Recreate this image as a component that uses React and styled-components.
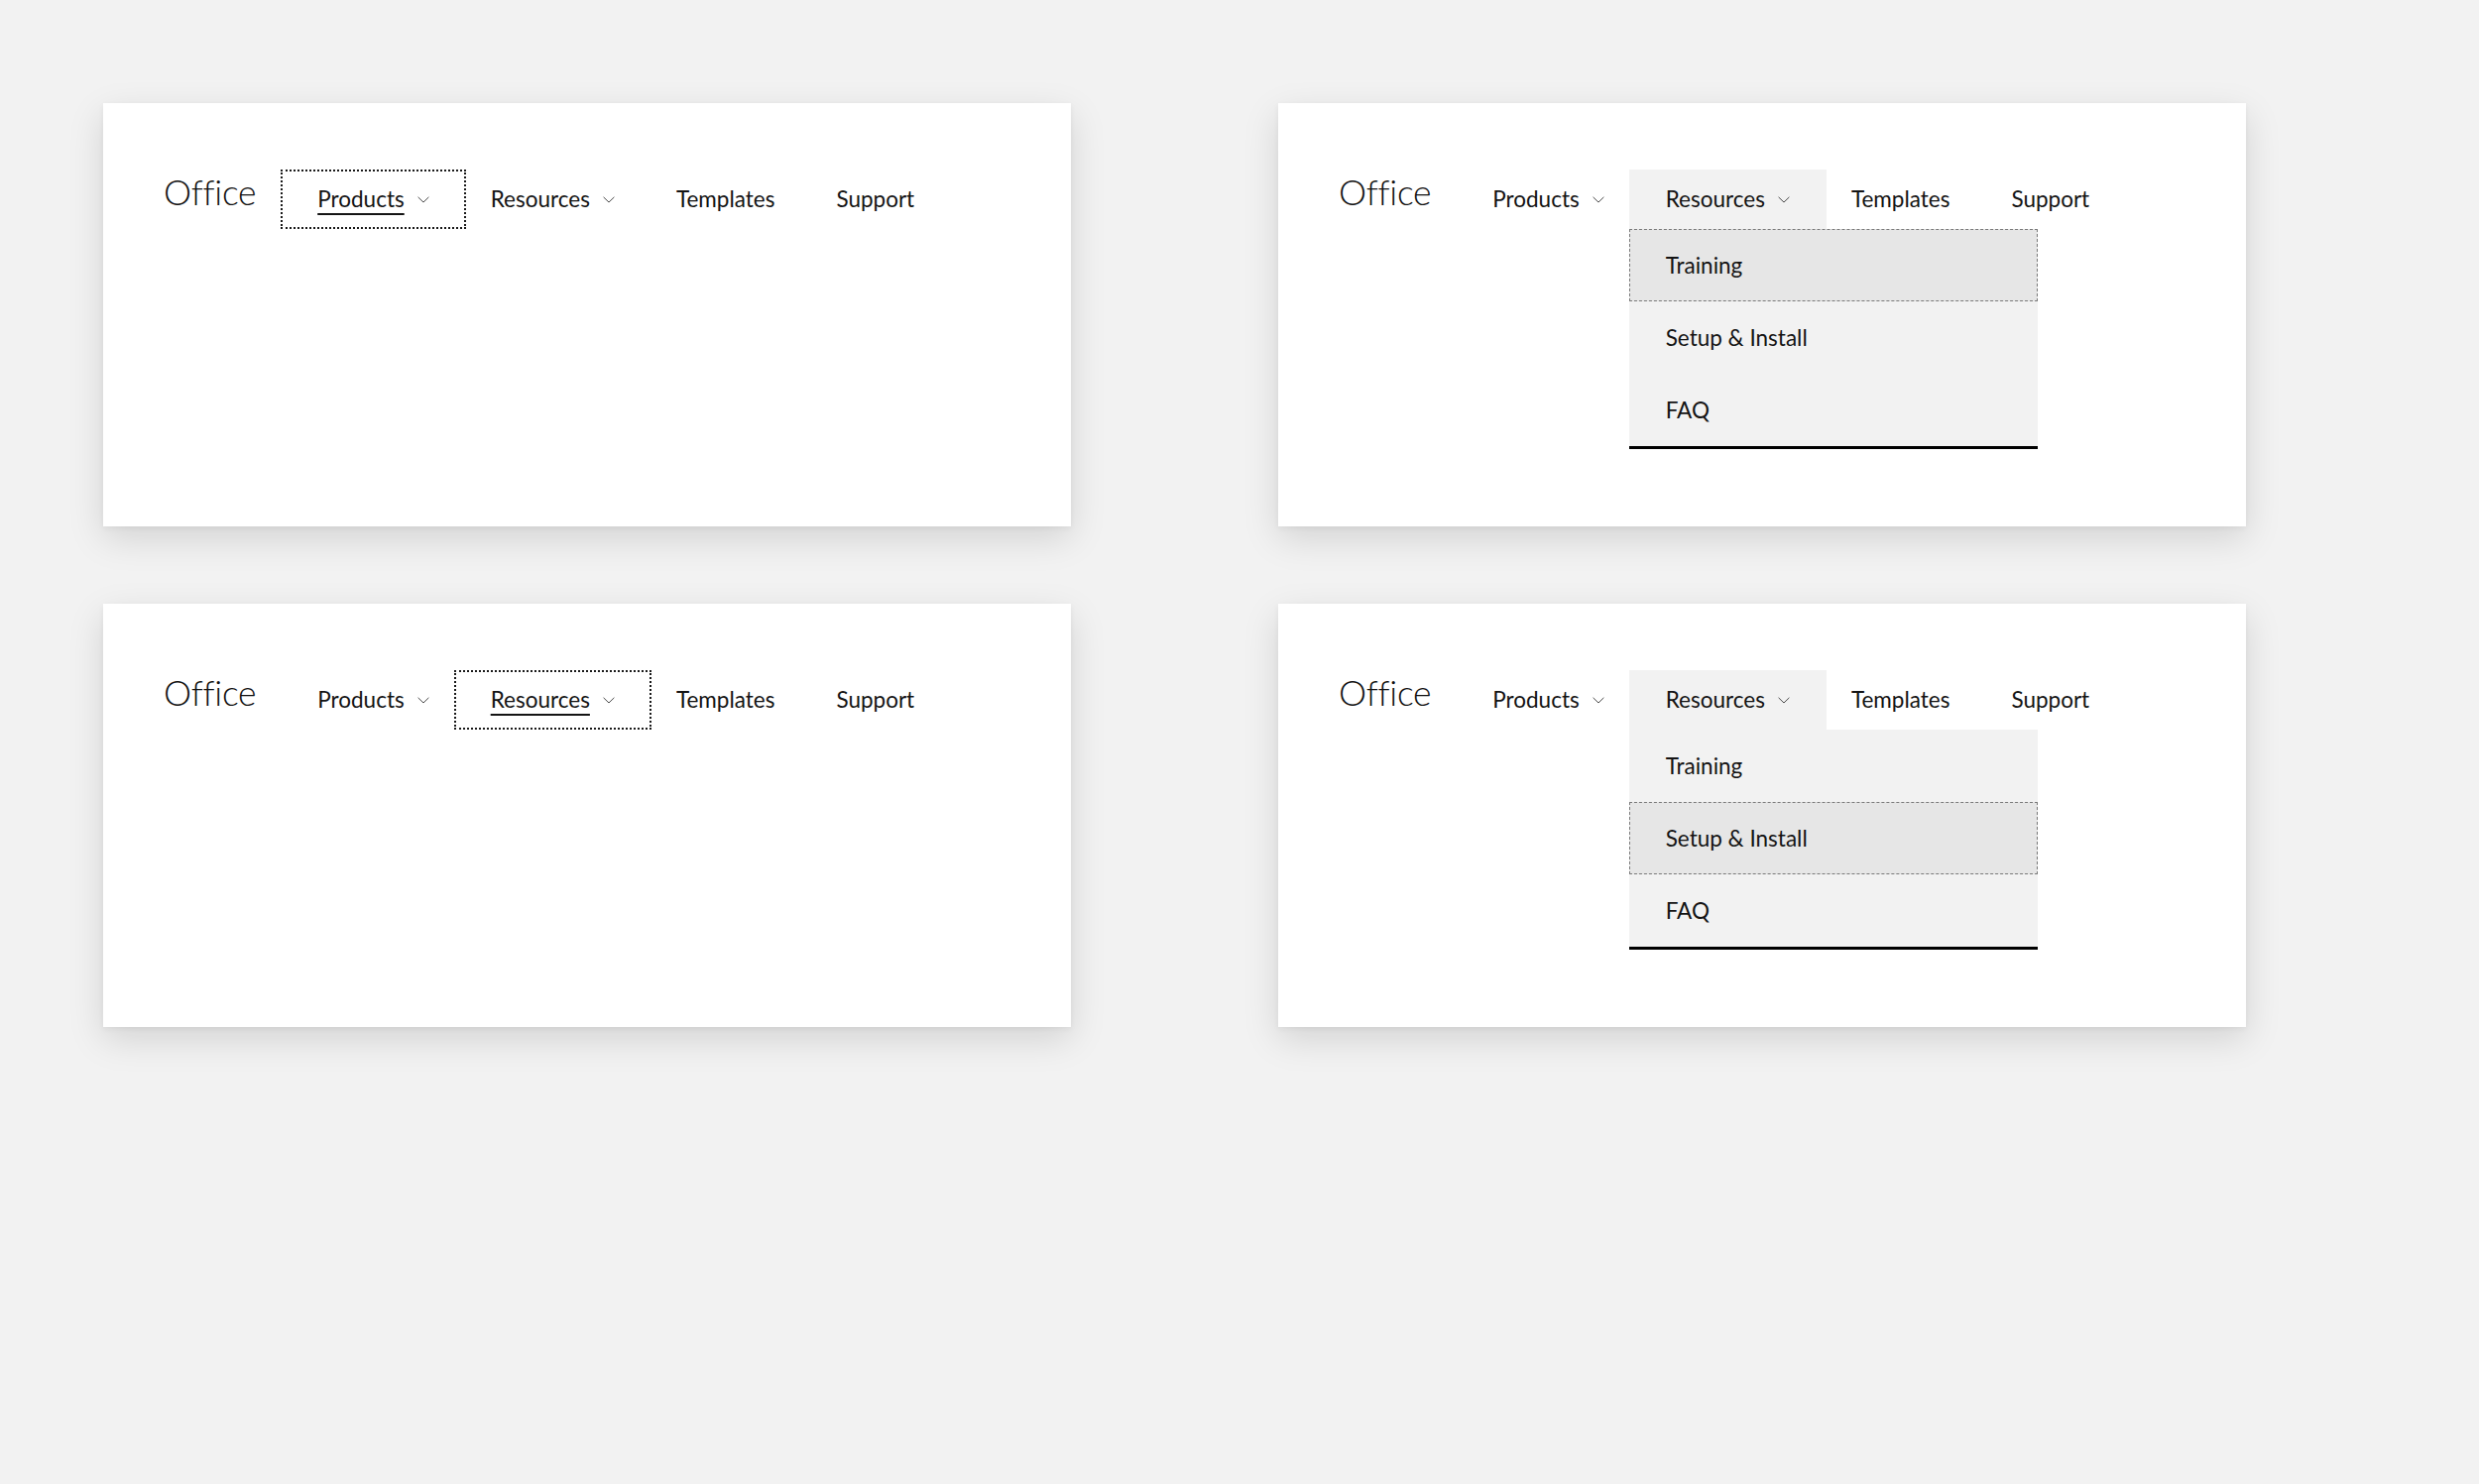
import React from "react";
import styled, { createGlobalStyle, css } from "styled-components";

const GlobalStyle = createGlobalStyle`
  html, body {
    margin: 0;
    padding: 0;
    background: #f2f2f2;
  }
  body {
    font-family: Lato, "Open Sans", sans-serif;
    color: #141414;
  }
`;

const menuLinks = ["Training", "Setup & Install", "FAQ"];

const states = [
  { focus: "Products" },
  { open: true, menuFocus: 0 },
  { focus: "Resources" },
  { open: true, menuFocus: 1 },
];

const Chevron = () => (
  <ChevronIcon viewBox="0 0 12 7" width="12" height="7">
    <path d="M0.6 0.8 L6 6 L11.4 0.8" fill="none" stroke="#4a4a4a" strokeWidth="1" />
  </ChevronIcon>
);

const Header = ({ focus, open, menuFocus }) => {
  return (
    <NavBar>
      <Logo>Office</Logo>
      <NavItem $focused={focus === "Products"}>
        <Label $underline={focus === "Products"}>Products</Label>
        <Chevron />
      </NavItem>
      <NavItem $focused={focus === "Resources"} $expanded={open}>
        <Label $underline={focus === "Resources"}>Resources</Label>
        <Chevron />
        {open && (
          <Menu>
            {menuLinks.map((link, i) => (
              <MenuItem key={link} $focused={menuFocus === i}>
                {link}
              </MenuItem>
            ))}
          </Menu>
        )}
      </NavItem>
      <NavItem>
        <Label>Templates</Label>
      </NavItem>
      <NavItem>
        <Label>Support</Label>
      </NavItem>
    </NavBar>
  );
};

const App = () => {
  return (
    <>
      <GlobalStyle />
      <Page>
        {states.map((s, i) => (
          <Card key={i}>
            <Header {...s} />
          </Card>
        ))}
      </Page>
    </>
  );
};

const Page = styled.div`
  display: grid;
  grid-template-columns: 976px 976px;
  grid-auto-rows: 427px;
  column-gap: 209px;
  row-gap: 78px;
  padding: 104px 0 0 104px;
  min-height: 1497px;
  box-sizing: border-box;
`;

const Card = styled.div`
  background: #fff;
  box-shadow: 0 12px 34px rgba(0, 0, 0, 0.13), 0 2px 6px rgba(0, 0, 0, 0.05);
  padding: 67px 0 0 61px;
  box-sizing: border-box;
`;

const NavBar = styled.nav`
  display: flex;
  align-items: stretch;
  height: 60px;
`;

const Logo = styled.div`
  align-self: center;
  font-size: 35.5px;
  font-weight: 300;
  line-height: 1;
  letter-spacing: -0.3px;
  margin: 0 25px 14px 0;
  color: #111;
`;

const NavItem = styled.div`
  position: relative;
  display: flex;
  align-items: center;
  gap: 13px;
  padding: 0 37px 2px;
  box-sizing: border-box;
  font-size: 22.5px;
  line-height: 1.2;
  white-space: nowrap;

  & + & {
    margin-left: -12px;
  }

  ${(p) =>
    p.$expanded &&
    css`
      background: #f2f2f2;
    `}

  ${(p) =>
    p.$focused &&
    css`
      outline: 2px dotted #1a1a1a;
      outline-offset: -2px;
    `}
`;

const Label = styled.span`
  ${(p) =>
    p.$underline &&
    css`
      text-decoration: underline;
      text-decoration-thickness: 2px;
      text-underline-offset: 6px;
    `}
`;

const ChevronIcon = styled.svg`
  display: block;
  margin-top: 2px;
`;

const Menu = styled.ul`
  position: absolute;
  top: 100%;
  left: 0;
  width: 412px;
  margin: 0;
  padding: 0;
  list-style: none;
  background: #f2f2f2;
  border-bottom: 3px solid #000;
  z-index: 2;
`;

const MenuItem = styled.li`
  display: flex;
  align-items: center;
  height: 73px;
  padding: 0 37px 1px;
  box-sizing: border-box;
  font-size: 22.5px;

  ${(p) =>
    p.$focused &&
    css`
      background: #e6e6e6;
      outline: 1px dashed #7a7a7a;
      outline-offset: -1px;
    `}
`;

export default App;
